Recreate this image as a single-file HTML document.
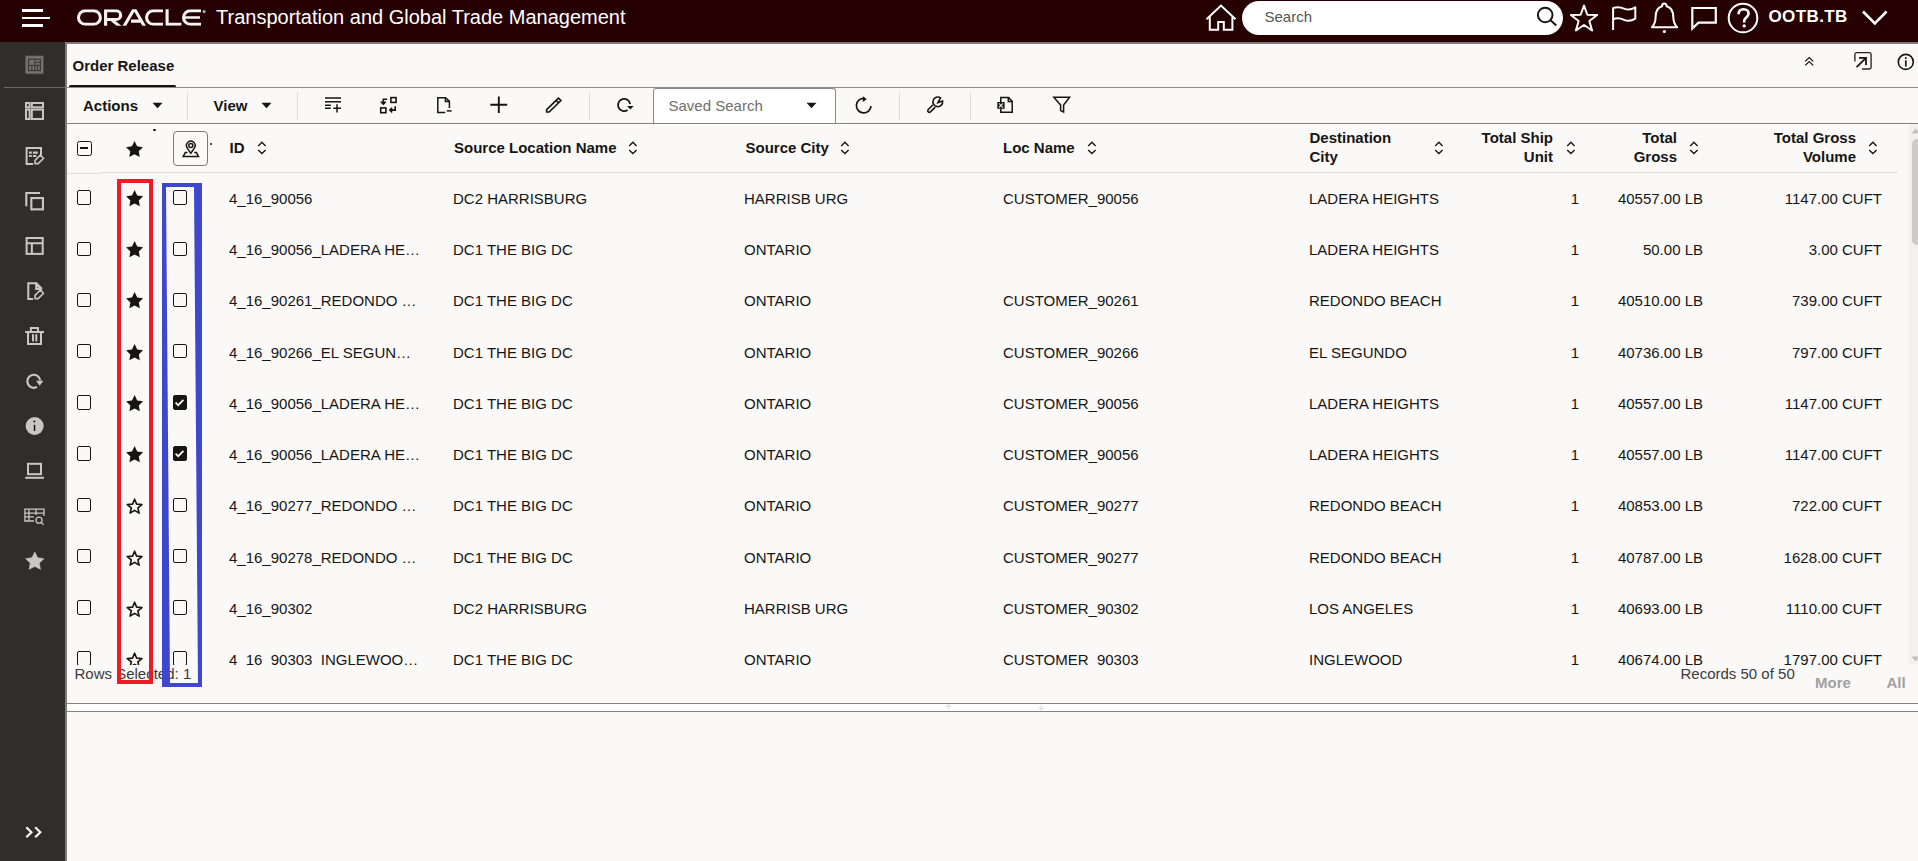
<!DOCTYPE html>
<html><head><meta charset="utf-8">
<style>
*{margin:0;padding:0;box-sizing:border-box}
html,body{width:1918px;height:861px;overflow:hidden;background:#faf9f8;font-family:"Liberation Sans",sans-serif;color:#161513}
.abs{position:absolute}
#hdr{position:absolute;left:0;top:0;width:1918px;height:42px;background:#260000}
#side{position:absolute;left:0;top:42px;width:65px;height:819px;background:#312d2a}
.sic{position:absolute;left:25px}
.c{position:absolute;font-size:15px;line-height:51.23px;height:51.23px;white-space:nowrap}
.r{text-align:right}
.cb{position:absolute;width:14.4px;height:14.4px;border:1.35px solid #161513;border-radius:2px;background:transparent}
.cbon{background:#161513}
.cbon svg{position:absolute;left:-1.6px;top:-1.6px}
.ic{position:absolute}
.ic svg{display:block}
.sort{position:absolute}
.hd{position:absolute;font-size:15px;font-weight:bold;line-height:19px;white-space:nowrap}
.tb{position:absolute}
.tb svg{display:block}
.vsep{position:absolute;top:92px;width:1px;height:28px;background:#dedcda}
</style></head><body>

<!-- HEADER -->
<div id="hdr">
  <div class="abs" style="left:22px;top:9px;width:21px;height:2.5px;background:#fff"></div>
  <div class="abs" style="left:22px;top:16.5px;width:28px;height:2.5px;background:#fff"></div>
  <div class="abs" style="left:22px;top:24px;width:21px;height:2.5px;background:#fff"></div>
  <svg class="abs" style="left:0;top:0" width="210" height="42" viewBox="0 0 210 42">
    <defs><clipPath id="lc"><rect x="70" y="9.2" width="140" height="16.6"/></clipPath></defs>
    <g fill="none" stroke="#f4f4f4" stroke-width="3.1" clip-path="url(#lc)">
      <rect x="78.5" y="10.75" width="21.9" height="13.5" rx="6.75"/>
      <path d="M105.6 27 V10.75 H116.2 A4.4 4.4 0 0 1 116.2 19.55 H107"/>
      <path d="M111.2 19.4 L121.2 27.6"/>
      <path d="M123.2 27.8 L134.3 8.6 L145.3 27.8" stroke-linejoin="round"/>
      <path d="M131 21.1 H140.5" stroke-width="3.2"/>
      <path d="M163 10.75 H153.3 A6.75 6.75 0 0 0 153.3 24.25 H163"/>
      <path d="M167.1 9 V24.25 H181.4"/>
      <path d="M201 10.75 H190.3 A6.75 6.75 0 0 0 190.3 24.25 H201"/>
      <path d="M184 17.5 H200" stroke-width="2.6"/>
    </g>
    <circle cx="204.1" cy="11.6" r="1.6" fill="#aaa"/>
  </svg>
  <div class="abs" style="left:216px;top:6px;font-size:20px;color:#fff;white-space:nowrap;line-height:23px">Transportation and Global Trade Management</div>

  <!-- home -->
  <svg class="abs" style="left:1204px;top:3px" width="34" height="30" viewBox="0 0 34 30">
    <path d="M2.5 16.2 L17 2.6 L31.5 16.2 M5.8 13.3 V26.8 H14.2 V19 H19.8 V26.8 H28.4 V13.3" fill="none" stroke="#fff" stroke-width="2"/>
  </svg>
  <!-- search -->
  <div class="abs" style="left:1242px;top:0.5px;width:321px;height:34px;border-radius:17px;background:#fff"></div>
  <div class="abs" style="left:1264.5px;top:8px;font-size:15px;color:#555;line-height:17px">Search</div>
  <svg class="abs" style="left:1535px;top:5px" width="24" height="24" viewBox="0 0 24 24">
    <circle cx="10.2" cy="10" r="7.3" fill="none" stroke="#161513" stroke-width="2"/>
    <path d="M15.5 15.3 L21.3 20.6" stroke="#161513" stroke-width="2"/>
  </svg>
  <!-- star -->
  <svg class="abs" style="left:1564px;top:0px" width="40" height="36" viewBox="1564 0 40 36">
    <path d="M1584.00 5.50 L1587.33 14.72 L1597.12 15.04 L1589.38 21.05 L1592.11 30.46 L1584.00 24.96 L1575.89 30.46 L1578.62 21.05 L1570.88 15.04 L1580.67 14.72 Z" fill="none" stroke="#fff" stroke-width="2" stroke-linejoin="round"/>
  </svg>
  <!-- flag -->
  <svg class="abs" style="left:1606px;top:0px" width="36" height="36" viewBox="1606 0 36 36">
    <path d="M1613.1 29.9 V8.2 C1617 6.4 1620.5 7 1624 8.6 C1628 10.4 1631.5 9.8 1635.3 7.4 V18.6 C1631.5 21 1628 21.6 1624 19.8 C1620.5 18.2 1617 17.6 1613.1 19.4" fill="none" stroke="#fff" stroke-width="2" stroke-linejoin="round"/>
  </svg>
  <!-- bell -->
  <svg class="abs" style="left:1650px;top:1px" width="30" height="34" viewBox="0 0 30 34">
    <path d="M14.2 2.6 C15.8 2.6 16.6 4 16.6 5.2 C21.4 6.4 23.3 10.5 23.3 16 C23.3 21 24.5 23.5 27.2 26.3 H1.9 C4.6 23.5 5.6 21 5.6 16 C5.6 10.5 7.4 6.4 12.1 5.2 C12.1 4 12.8 2.6 14.2 2.6 Z" fill="none" stroke="#fff" stroke-width="2" stroke-linejoin="round"/>
    <circle cx="14.4" cy="30.5" r="1.6" fill="#fff"/>
  </svg>
  <!-- chat -->
  <svg class="abs" style="left:1690px;top:5px" width="30" height="26" viewBox="0 0 30 26">
    <path d="M2.3 3 H25.8 V17.6 H8.5 L2.3 23.5 Z" fill="none" stroke="#fff" stroke-width="2.2" stroke-linejoin="miter"/>
  </svg>
  <!-- help -->
  <svg class="abs" style="left:1726px;top:1px" width="34" height="34" viewBox="0 0 34 34">
    <circle cx="17" cy="17" r="14.3" fill="none" stroke="#fff" stroke-width="2"/>
    <path d="M12.6 13.2 C12.6 10 14.8 8.3 17.6 8.3 C20.5 8.3 22.6 10.1 22.6 12.6 C22.6 16.2 18.2 16.4 18.2 20.2 V21.4" fill="none" stroke="#fff" stroke-width="2.6"/>
    <circle cx="18.2" cy="24.9" r="1.7" fill="#fff"/>
  </svg>
  <div class="abs" style="left:1768.5px;top:7px;font-size:17px;font-weight:bold;color:#fff;letter-spacing:0.4px;line-height:19px">OOTB.TB</div>
  <svg class="abs" style="left:1860px;top:8px" width="30" height="20" viewBox="0 0 30 20">
    <path d="M3 3.5 L14.8 15.3 L26.6 3.5" fill="none" stroke="#fff" stroke-width="2.6"/>
  </svg>
</div>

<!-- SIDEBAR -->
<div id="side">
  <div class="abs" style="left:4px;top:45px;width:61px;height:1px;background:#6b6967"></div>
</div>
<svg class="abs" style="left:22px;top:52px" width="24" height="24" viewBox="22 52 24 24" ><rect x="25.4" y="55.8" width="18" height="18" fill="#74716f"/><rect x="25.4" y="55.8" width="18" height="18" fill="none" stroke="#5a5653" stroke-width="0.8" stroke-dasharray="1 1"/><g fill="none" stroke="#3a3633" stroke-width="1.1"><rect x="28.6" y="59.2" width="11.8" height="11.4"/><path d="M28.6 65.3 H40.4 M34.9 59.2 V65.3 M34.9 62.2 H40.4 M31.9 65.3 V70.6 M34.9 65.3 V70.6 M37.6 65.3 V70.6"/></g></svg>
<svg class="abs" style="left:22px;top:98px" width="24" height="24" viewBox="22 98 24 24" ><g fill="none" stroke="#c9c7c5" stroke-width="2"><rect x="26" y="103" width="3.6" height="4.3"/><rect x="31.8" y="103" width="11.2" height="4.3"/><rect x="26" y="109.6" width="3.6" height="9.4"/><rect x="31.8" y="109.6" width="11.2" height="9.4"/></g></svg>
<svg class="abs" style="left:22px;top:143px" width="26" height="26" viewBox="22 143 26 26" ><g fill="none" stroke="#c9c7c5" stroke-width="2"><path d="M33.2 163.9 H26.6 V148.1 H41 V155"/></g><g fill="#c9c7c5"><rect x="29" y="151.5" width="2.8" height="2.3"/><rect x="32.9" y="151.5" width="4.9" height="2.3"/><rect x="29" y="155" width="2.8" height="2"/><rect x="32.9" y="155" width="3.5" height="2"/></g><path d="M35 163.6 V160.4 L40.4 155 L43.6 158.2 L38.2 163.6 Z" fill="none" stroke="#c9c7c5" stroke-width="1.6" stroke-linejoin="round"/></svg>
<svg class="abs" style="left:22px;top:188px" width="24" height="26" viewBox="22 188 24 26" ><g fill="none" stroke="#c9c7c5" stroke-width="2.1"><path d="M26.3 206.2 V193 H40"/><rect x="31.35" y="198.05" width="11.6" height="11.3"/></g></svg>
<svg class="abs" style="left:22px;top:233px" width="24" height="24" viewBox="22 233 24 24" ><g fill="none" stroke="#c9c7c5" stroke-width="2"><rect x="26.6" y="238" width="16.1" height="15.9"/><path d="M26.6 243.2 H42.7 M31.85 243.2 V253.9"/></g></svg>
<svg class="abs" style="left:22px;top:278px" width="26" height="26" viewBox="22 278 26 26" ><g fill="none" stroke="#c9c7c5" stroke-width="2"><path d="M33.2 298.9 H28.3 V283.3 H36.3"/></g><path d="M35.2 282.3 H36.8 L42.2 287.8 V290 H35.2 Z" fill="#c9c7c5"/><path d="M37 288 L38.2 286.8" stroke="#555" stroke-width="0.8"/><path d="M35 298.6 V295.4 L40.4 290 L43.6 293.2 L38.2 298.6 Z" fill="none" stroke="#c9c7c5" stroke-width="1.6" stroke-linejoin="round"/></svg>
<svg class="abs" style="left:22px;top:322px" width="24" height="26" viewBox="22 322 24 26" ><g fill="none" stroke="#c9c7c5" stroke-width="2"><path d="M25.2 332 H44 M28 332.9 V344 H41 V332.9 M30.9 331 V328 H38 V331"/></g><g fill="#c9c7c5"><rect x="32" y="334.2" width="2" height="7.2"/><rect x="35.3" y="334.2" width="2" height="7.2"/></g></svg>
<svg class="abs" style="left:22px;top:370px" width="24" height="24" viewBox="22 370 24 24" ><path d="M37.05 386.9 A6.5 6.5 0 1 1 40.24 380.4" fill="none" stroke="#c9c7c5" stroke-width="2.2"/><path d="M36 380.8 H43.4 L39.7 385.8 Z" fill="#c9c7c5"/></svg>
<svg class="abs" style="left:22px;top:414px" width="24" height="24" viewBox="22 414 24 24" ><circle cx="34.65" cy="426" r="9" fill="#c9c7c5"/><path d="M34.55 424.8 V431" stroke="#161513" stroke-width="1.5"/><circle cx="34.4" cy="421.6" r="1" fill="#161513"/></svg>
<svg class="abs" style="left:22px;top:460px" width="24" height="22" viewBox="22 460 24 22" ><g fill="none" stroke="#c9c7c5" stroke-width="2"><rect x="28" y="463.8" width="13" height="10.4"/><path d="M25.2 477.8 H44"/></g></svg>
<svg class="abs" style="left:22px;top:505px" width="26" height="24" viewBox="22 505 26 24" ><g fill="none" stroke="#c9c7c5" stroke-width="1.3"><path d="M34 521 H24.9 V509.2 H44 V516 M24.9 513.1 H44 M24.9 516.8 H34 M28.9 509.2 V521 M36 509.2 V515"/><circle cx="39" cy="520.2" r="3"/><path d="M41.2 522.4 L43.6 524.8"/></g></svg>
<svg class="abs" style="left:22px;top:548px" width="26" height="24" viewBox="22 548 26 24" ><path d="M34.80 552.00 L37.62 557.72 L43.93 558.63 L39.37 563.08 L40.44 569.37 L34.80 566.40 L29.16 569.37 L30.23 563.08 L25.67 558.63 L31.98 557.72 Z" fill="#c9c7c5" stroke="#c9c7c5" stroke-width="0.6" stroke-linejoin="round"/></svg>
<svg class="abs" style="left:22px;top:822px" width="24" height="20" viewBox="22 822 24 20" ><g fill="none" stroke="#f6f6f6" stroke-width="2.2"><path d="M26.3 827.2 L31.4 832.2 L26.3 837.2 M35.2 827.2 L40.3 832.2 L35.2 837.2"/></g></svg>

<!-- main borders -->
<div class="abs" style="left:65px;top:42px;width:2px;height:819px;background:#7d7b79"></div>
<div class="abs" style="left:65px;top:42px;width:1853px;height:2px;background:#7d7b79"></div>
<div class="abs" style="left:67px;top:44px;width:1851px;height:1px;background:#fff"></div>

<!-- title -->
<div class="abs" style="left:72.5px;top:56.5px;font-size:15px;font-weight:bold;line-height:17px;white-space:nowrap">Order Release</div>
<div class="abs" style="left:68.5px;top:85px;width:107px;height:2.2px;border-radius:1.5px 1.5px 0 0;background:#161513"></div>
<div class="abs" style="left:67px;top:87px;width:1851px;height:1px;background:#8f8d8b"></div>
<svg class="abs" style="left:1800px;top:52px" width="18" height="18" viewBox="1800 52 18 18" ><path d="M1805.2 61.4 L1809.2 57.6 L1813.2 61.4 M1805.2 65.4 L1809.2 61.6 L1813.2 65.4" fill="none" stroke="#161513" stroke-width="1.3"/></svg>
<svg class="abs" style="left:1850px;top:48px" width="26" height="26" viewBox="1850 48 26 26" ><g fill="none" stroke="#2a2421" stroke-width="1.35"><path d="M1854.9 61.5 V54.4 A1.8 1.8 0 0 1 1856.7 52.6 H1869.3 A1.8 1.8 0 0 1 1871.1 54.4 V67.2 A1.8 1.8 0 0 1 1869.3 69 H1862"/></g><g fill="none" stroke="#161513" stroke-width="1.8"><path d="M1856.6 67.2 L1866 57.8 M1859 57.8 H1866 V65"/></g></svg>
<svg class="abs" style="left:1894px;top:50px" width="24" height="24" viewBox="1894 50 24 24" ><circle cx="1905.8" cy="61.9" r="7.5" fill="none" stroke="#161513" stroke-width="1.6"/><path d="M1905.8 60.3 V66.6" stroke="#161513" stroke-width="1.7"/><circle cx="1905.8" cy="58" r="1" fill="#161513"/></svg>

<!-- toolbar -->
<div class="abs" style="left:83px;top:96.5px;font-size:15px;font-weight:bold;line-height:17px">Actions</div>
<svg class="abs" style="left:152px;top:102px" width="11" height="7" viewBox="0 0 11 7"><path d="M0.5 0.8 H10.5 L5.5 6.2 Z" fill="#161513"/></svg>
<div class="vsep" style="left:187px"></div>
<div class="abs" style="left:213.5px;top:96.5px;font-size:15px;font-weight:bold;line-height:17px">View</div>
<svg class="abs" style="left:261px;top:102px" width="11" height="7" viewBox="0 0 11 7"><path d="M0.5 0.8 H10.5 L5.5 6.2 Z" fill="#161513"/></svg>
<div class="vsep" style="left:297px"></div>
<svg class="abs" style="left:320px;top:92px" width="26" height="24" viewBox="320 92 26 24" ><g stroke="#161513" stroke-width="1.5" fill="none"><path d="M325 98.1 H341 M325 101.7 H341 M325 105.3 H330.8 M325 108.2 H330.8 M333.3 108.2 H341 M337 104.2 V112.6"/></g></svg>
<svg class="abs" style="left:376px;top:92px" width="26" height="24" viewBox="376 92 26 24" ><g stroke="#161513" stroke-width="1.6" fill="none"><rect x="390.9" y="97.6" width="5.2" height="4.8"/><rect x="380.7" y="107.9" width="5.2" height="4.8"/><path d="M387.2 99.3 H383.3 V103.8 M380.9 101.6 L383.3 104 L385.7 101.6 M395.2 106.3 V110.1 H390 M392.2 107.7 L389.8 110.1 L392.2 112.5"/></g></svg>
<svg class="abs" style="left:432px;top:92px" width="24" height="24" viewBox="432 92 24 24" ><g stroke="#161513" stroke-width="1.5" fill="none"><path d="M445.2 112.4 H437.8 V97.7 H445.6 L449.4 101.4 V108"/><path d="M445.4 97.8 V101.6 H449.3"/><path d="M446.8 110.9 H451.6"/></g></svg>
<svg class="abs" style="left:486px;top:92px" width="26" height="24" viewBox="486 92 26 24" ><g stroke="#161513" stroke-width="1.9" fill="none"><path d="M490.3 104.8 H507.2 M498.8 96.6 V113"/></g></svg>
<svg class="abs" style="left:540px;top:92px" width="26" height="24" viewBox="540 92 26 24" ><g stroke="#161513" stroke-width="1.6" fill="none" stroke-linejoin="miter"><path d="M558.4 98.1 L560.9 100.5 L549.2 112 H546.6 V109.6 Z M556.1 100.3 L558.7 102.8"/></g></svg>
<svg class="abs" style="left:612px;top:92px" width="26" height="24" viewBox="612 92 26 24" ><path d="M627.5 110.06 A6.1 6.1 0 1 1 630.14 104.15" fill="none" stroke="#161513" stroke-width="1.8"/><path d="M627.1 105.9 H633.6 L630.35 109.4 Z" fill="#161513"/></svg>
<svg class="abs" style="left:852px;top:92px" width="26" height="24" viewBox="852 92 26 24" ><path d="M864.6 98.4 A7.3 7.3 0 1 0 871 106" fill="none" stroke="#161513" stroke-width="1.7"/><path d="M862.8 96.2 L866.8 99.2 L862.8 102 Z" fill="#161513"/></svg>
<svg class="abs" style="left:922px;top:92px" width="26" height="24" viewBox="922 92 26 24" ><g stroke="#161513" stroke-width="1.6" fill="none" stroke-linejoin="miter"><path d="M940.5 97.8 A4.85 4.85 0 1 0 942.6 101.1 L937.9 102.6 Z"/><path d="M935.3 107.1 L930.4 111.9 A1.6 1.6 0 0 1 928.1 109.7 L933 104.8"/></g></svg>
<svg class="abs" style="left:994px;top:92px" width="24" height="24" viewBox="994 92 24 24" ><g stroke="#161513" stroke-width="1.5" fill="none"><path d="M1000.8 102 V97.5 H1008.6 L1012.2 101.2 V112.2 H1000.8 V108.7"/><path d="M1008.3 97.6 V101.5 H1012.2"/></g><rect x="997.3" y="102" width="7.3" height="6.8" fill="#161513"/><path d="M999 103.3 L1002.9 107.5 M1002.9 103.3 L999 107.5" stroke="#d8d8d8" stroke-width="1.2"/></svg>
<svg class="abs" style="left:1050px;top:92px" width="24" height="24" viewBox="1050 92 24 24" ><path d="M1053.8 97.3 H1069.6 L1063.6 105 V112 L1060.6 110.6 V105 Z" fill="none" stroke="#161513" stroke-width="1.5" stroke-linejoin="miter"/></svg>
<div class="vsep" style="left:589px"></div>
<!-- saved search -->
<div class="abs" style="left:653px;top:88px;width:183px;height:35.5px;background:#fff;border:1px solid #8a8a8a;border-bottom:none;border-radius:3px 3px 0 0"></div>
<div class="abs" style="left:668.5px;top:96.5px;font-size:15px;line-height:17px;color:#6f6e6c">Saved Search</div>
<svg class="abs" style="left:806px;top:102px" width="11" height="7" viewBox="0 0 11 7"><path d="M0.5 0.8 H10.5 L5.5 6.2 Z" fill="#161513"/></svg>
<div class="vsep" style="left:899px"></div>
<div class="vsep" style="left:970px"></div>
<div class="abs" style="left:67px;top:123px;width:1851px;height:1.3px;background:#828282"></div><div class="abs" style="left:67px;top:124.3px;width:1842px;height:1px;background:#fff"></div>

<!-- table header -->
<div class="abs" style="left:101px;top:172px;width:335px;height:1px;background:#e0dedc"></div>
<div class="abs" style="left:67px;top:173px;width:34px;height:1px;background:#e0dedc"></div>
<div class="abs" style="left:436px;top:172px;width:1461px;height:1px;background:#e0dedc"></div>
<div class="abs" style="left:76.6px;top:141px;width:15px;height:14.6px;border:1.5px solid #161513;border-radius:2.5px"></div>
<div class="abs" style="left:80.2px;top:147.3px;width:7.8px;height:1.6px;background:#161513"></div>
<svg class="abs" style="left:122px;top:136px" width="26" height="24" viewBox="122 136 26 24" ><path d="M134.50 141.00 L137.12 146.30 L142.96 147.15 L138.73 151.28 L139.73 157.10 L134.50 154.35 L129.27 157.10 L130.27 151.28 L126.04 147.15 L131.88 146.30 Z" fill="#161513"/></svg>
<div class="abs" style="left:153.2px;top:128.7px;width:2.5px;height:2.5px;background:#161513;border-radius:1px"></div>
<div class="abs" style="left:209.5px;top:142.6px;width:2.5px;height:2.5px;background:#161513;border-radius:1px"></div>
<div class="abs" style="left:173.2px;top:131.1px;width:34.4px;height:34.6px;border:1px solid #7d7b79;border-radius:4px"></div>
<svg class="abs" style="left:180px;top:138px" width="22" height="22" viewBox="180 138 22 22" ><g fill="none" stroke="#161513" stroke-width="1.5"><path d="M190.8 153.4 L187.15 147.8 A4.3 4.3 0 1 1 194.45 147.8 Z" stroke-linejoin="round"/><circle cx="190.8" cy="145.6" r="2"/><path d="M187.5 152.6 H185.3 L183.2 156.5 H198.5 L196.4 152.6 H194.2"/></g></svg>
<div class="hd" style="left:229.5px;top:137.9px">ID</div>
<svg class="abs" style="left:255.5px;top:141.4px" width="12" height="14" viewBox="255.5 141.4 12 14" ><path d="M257.7 146.4 L261.4 142.70000000000002 L265.1 146.4 M257.7 150.3 L261.4 153.9 L265.1 150.3" fill="none" stroke="#161513" stroke-width="1.35"/></svg>
<div class="hd" style="left:454px;top:137.9px">Source Location Name</div>
<svg class="abs" style="left:626.5px;top:141.4px" width="12" height="14" viewBox="626.5 141.4 12 14" ><path d="M628.7 146.4 L632.4 142.70000000000002 L636.1 146.4 M628.7 150.3 L632.4 153.9 L636.1 150.3" fill="none" stroke="#161513" stroke-width="1.35"/></svg>
<div class="hd" style="left:745.5px;top:137.9px">Source City</div>
<svg class="abs" style="left:839px;top:141.4px" width="12" height="14" viewBox="839 141.4 12 14" ><path d="M841.2 146.4 L844.9 142.70000000000002 L848.6 146.4 M841.2 150.3 L844.9 153.9 L848.6 150.3" fill="none" stroke="#161513" stroke-width="1.35"/></svg>
<div class="hd" style="left:1003px;top:137.9px">Loc Name</div>
<svg class="abs" style="left:1086px;top:141.4px" width="12" height="14" viewBox="1086 141.4 12 14" ><path d="M1088.2 146.4 L1091.9 142.70000000000002 L1095.6 146.4 M1088.2 150.3 L1091.9 153.9 L1095.6 150.3" fill="none" stroke="#161513" stroke-width="1.35"/></svg>
<div class="hd" style="left:1309.5px;top:128.1px">Destination<br>City</div>
<svg class="abs" style="left:1433.3px;top:141.4px" width="12" height="14" viewBox="1433.3 141.4 12 14" ><path d="M1435.5 146.4 L1439.2 142.70000000000002 L1442.8999999999999 146.4 M1435.5 150.3 L1439.2 153.9 L1442.8999999999999 150.3" fill="none" stroke="#161513" stroke-width="1.35"/></svg>
<div class="hd" style="right:365px;top:128.1px;text-align:right">Total Ship<br>Unit</div>
<svg class="abs" style="left:1564.8px;top:141.4px" width="12" height="14" viewBox="1564.8 141.4 12 14" ><path d="M1567.0 146.4 L1570.7 142.70000000000002 L1574.3999999999999 146.4 M1567.0 150.3 L1570.7 153.9 L1574.3999999999999 150.3" fill="none" stroke="#161513" stroke-width="1.35"/></svg>
<div class="hd" style="right:241px;top:128.1px;text-align:right">Total<br>Gross</div>
<svg class="abs" style="left:1688.3px;top:141.4px" width="12" height="14" viewBox="1688.3 141.4 12 14" ><path d="M1690.5 146.4 L1694.2 142.70000000000002 L1697.8999999999999 146.4 M1690.5 150.3 L1694.2 153.9 L1697.8999999999999 150.3" fill="none" stroke="#161513" stroke-width="1.35"/></svg>
<div class="hd" style="right:62px;top:128.1px;text-align:right">Total Gross<br>Volume</div>
<svg class="abs" style="left:1867.2px;top:141.4px" width="12" height="14" viewBox="1867.2 141.4 12 14" ><path d="M1869.4 146.4 L1873.1000000000001 142.70000000000002 L1876.8 146.4 M1869.4 150.3 L1873.1000000000001 153.9 L1876.8 150.3" fill="none" stroke="#161513" stroke-width="1.35"/></svg>

<div class="cb" style="left:76.8px;top:190.3px"></div>
<svg class="abs" style="left:122px;top:187.00px" width="26" height="24" viewBox="122 187.00 26 24"><path d="M134.60 190.10 L137.22 195.40 L143.06 196.25 L138.83 200.38 L139.83 206.20 L134.60 203.45 L129.37 206.20 L130.37 200.38 L126.14 196.25 L131.98 195.40 Z" fill="#161513"/></svg>
<div class="cb" style="left:173px;top:190.3px"></div>
<div class="c" style="left:229px;top:173.0px">4_16_90056</div>
<div class="c" style="left:453px;top:173.0px">DC2 HARRISBURG</div>
<div class="c" style="left:744px;top:173.0px">HARRISB URG</div>
<div class="c" style="left:1003px;top:173.0px">CUSTOMER_90056</div>
<div class="c" style="left:1309px;top:173.0px">LADERA HEIGHTS</div>
<div class="c r" style="right:339px;top:173.0px">1</div>
<div class="c r" style="right:215px;top:173.0px">40557.00 LB</div>
<div class="c r" style="right:36px;top:173.0px">1147.00 CUFT</div>
<div class="cb" style="left:76.8px;top:241.53px"></div>
<svg class="abs" style="left:122px;top:238.23px" width="26" height="24" viewBox="122 238.23 26 24"><path d="M134.60 241.33 L137.22 246.63 L143.06 247.48 L138.83 251.61 L139.83 257.43 L134.60 254.68 L129.37 257.43 L130.37 251.61 L126.14 247.48 L131.98 246.63 Z" fill="#161513"/></svg>
<div class="cb" style="left:173px;top:241.53px"></div>
<div class="c" style="left:229px;top:224.23px">4_16_90056_LADERA HE…</div>
<div class="c" style="left:453px;top:224.23px">DC1 THE BIG DC</div>
<div class="c" style="left:744px;top:224.23px">ONTARIO</div>
<div class="c" style="left:1003px;top:224.23px"></div>
<div class="c" style="left:1309px;top:224.23px">LADERA HEIGHTS</div>
<div class="c r" style="right:339px;top:224.23px">1</div>
<div class="c r" style="right:215px;top:224.23px">50.00 LB</div>
<div class="c r" style="right:36px;top:224.23px">3.00 CUFT</div>
<div class="cb" style="left:76.8px;top:292.76px"></div>
<svg class="abs" style="left:122px;top:289.46px" width="26" height="24" viewBox="122 289.46 26 24"><path d="M134.60 292.56 L137.22 297.86 L143.06 298.71 L138.83 302.84 L139.83 308.66 L134.60 305.91 L129.37 308.66 L130.37 302.84 L126.14 298.71 L131.98 297.86 Z" fill="#161513"/></svg>
<div class="cb" style="left:173px;top:292.76px"></div>
<div class="c" style="left:229px;top:275.46px">4_16_90261_REDONDO …</div>
<div class="c" style="left:453px;top:275.46px">DC1 THE BIG DC</div>
<div class="c" style="left:744px;top:275.46px">ONTARIO</div>
<div class="c" style="left:1003px;top:275.46px">CUSTOMER_90261</div>
<div class="c" style="left:1309px;top:275.46px">REDONDO BEACH</div>
<div class="c r" style="right:339px;top:275.46px">1</div>
<div class="c r" style="right:215px;top:275.46px">40510.00 LB</div>
<div class="c r" style="right:36px;top:275.46px">739.00 CUFT</div>
<div class="cb" style="left:76.8px;top:343.99px"></div>
<svg class="abs" style="left:122px;top:340.69px" width="26" height="24" viewBox="122 340.69 26 24"><path d="M134.60 343.79 L137.22 349.09 L143.06 349.94 L138.83 354.07 L139.83 359.89 L134.60 357.14 L129.37 359.89 L130.37 354.07 L126.14 349.94 L131.98 349.09 Z" fill="#161513"/></svg>
<div class="cb" style="left:173px;top:343.99px"></div>
<div class="c" style="left:229px;top:326.69px">4_16_90266_EL SEGUN…</div>
<div class="c" style="left:453px;top:326.69px">DC1 THE BIG DC</div>
<div class="c" style="left:744px;top:326.69px">ONTARIO</div>
<div class="c" style="left:1003px;top:326.69px">CUSTOMER_90266</div>
<div class="c" style="left:1309px;top:326.69px">EL SEGUNDO</div>
<div class="c r" style="right:339px;top:326.69px">1</div>
<div class="c r" style="right:215px;top:326.69px">40736.00 LB</div>
<div class="c r" style="right:36px;top:326.69px">797.00 CUFT</div>
<div class="cb" style="left:76.8px;top:395.22px"></div>
<svg class="abs" style="left:122px;top:391.92px" width="26" height="24" viewBox="122 391.92 26 24"><path d="M134.60 395.02 L137.22 400.32 L143.06 401.17 L138.83 405.30 L139.83 411.12 L134.60 408.37 L129.37 411.12 L130.37 405.30 L126.14 401.17 L131.98 400.32 Z" fill="#161513"/></svg>
<div class="cb cbon" style="left:173px;top:395.22px"><svg width="15" height="15" viewBox="0 0 15 15"><path d="M3.6 7.6 L6.2 10.2 L11.4 4.8" fill="none" stroke="#fff" stroke-width="1.8"/></svg></div>
<div class="c" style="left:229px;top:377.91999999999996px">4_16_90056_LADERA HE…</div>
<div class="c" style="left:453px;top:377.91999999999996px">DC1 THE BIG DC</div>
<div class="c" style="left:744px;top:377.91999999999996px">ONTARIO</div>
<div class="c" style="left:1003px;top:377.91999999999996px">CUSTOMER_90056</div>
<div class="c" style="left:1309px;top:377.91999999999996px">LADERA HEIGHTS</div>
<div class="c r" style="right:339px;top:377.91999999999996px">1</div>
<div class="c r" style="right:215px;top:377.91999999999996px">40557.00 LB</div>
<div class="c r" style="right:36px;top:377.91999999999996px">1147.00 CUFT</div>
<div class="cb" style="left:76.8px;top:446.45px"></div>
<svg class="abs" style="left:122px;top:443.15px" width="26" height="24" viewBox="122 443.15 26 24"><path d="M134.60 446.25 L137.22 451.55 L143.06 452.40 L138.83 456.53 L139.83 462.35 L134.60 459.60 L129.37 462.35 L130.37 456.53 L126.14 452.40 L131.98 451.55 Z" fill="#161513"/></svg>
<div class="cb cbon" style="left:173px;top:446.45px"><svg width="15" height="15" viewBox="0 0 15 15"><path d="M3.6 7.6 L6.2 10.2 L11.4 4.8" fill="none" stroke="#fff" stroke-width="1.8"/></svg></div>
<div class="c" style="left:229px;top:429.15px">4_16_90056_LADERA HE…</div>
<div class="c" style="left:453px;top:429.15px">DC1 THE BIG DC</div>
<div class="c" style="left:744px;top:429.15px">ONTARIO</div>
<div class="c" style="left:1003px;top:429.15px">CUSTOMER_90056</div>
<div class="c" style="left:1309px;top:429.15px">LADERA HEIGHTS</div>
<div class="c r" style="right:339px;top:429.15px">1</div>
<div class="c r" style="right:215px;top:429.15px">40557.00 LB</div>
<div class="c r" style="right:36px;top:429.15px">1147.00 CUFT</div>
<div class="cb" style="left:76.8px;top:497.68px"></div>
<svg class="abs" style="left:122px;top:494.38px" width="26" height="24" viewBox="122 494.38 26 24"><path d="M134.60 499.58 L136.64 504.48 L141.92 504.90 L137.90 508.35 L139.13 513.51 L134.60 510.74 L130.07 513.51 L131.30 508.35 L127.28 504.90 L132.56 504.48 Z" fill="none" stroke="#161513" stroke-width="1.6" stroke-linejoin="round"/></svg>
<div class="cb" style="left:173px;top:497.68px"></div>
<div class="c" style="left:229px;top:480.38px">4_16_90277_REDONDO …</div>
<div class="c" style="left:453px;top:480.38px">DC1 THE BIG DC</div>
<div class="c" style="left:744px;top:480.38px">ONTARIO</div>
<div class="c" style="left:1003px;top:480.38px">CUSTOMER_90277</div>
<div class="c" style="left:1309px;top:480.38px">REDONDO BEACH</div>
<div class="c r" style="right:339px;top:480.38px">1</div>
<div class="c r" style="right:215px;top:480.38px">40853.00 LB</div>
<div class="c r" style="right:36px;top:480.38px">722.00 CUFT</div>
<div class="cb" style="left:76.8px;top:548.91px"></div>
<svg class="abs" style="left:122px;top:545.61px" width="26" height="24" viewBox="122 545.61 26 24"><path d="M134.60 550.81 L136.64 555.71 L141.92 556.13 L137.90 559.58 L139.13 564.74 L134.60 561.97 L130.07 564.74 L131.30 559.58 L127.28 556.13 L132.56 555.71 Z" fill="none" stroke="#161513" stroke-width="1.6" stroke-linejoin="round"/></svg>
<div class="cb" style="left:173px;top:548.91px"></div>
<div class="c" style="left:229px;top:531.6099999999999px">4_16_90278_REDONDO …</div>
<div class="c" style="left:453px;top:531.6099999999999px">DC1 THE BIG DC</div>
<div class="c" style="left:744px;top:531.6099999999999px">ONTARIO</div>
<div class="c" style="left:1003px;top:531.6099999999999px">CUSTOMER_90277</div>
<div class="c" style="left:1309px;top:531.6099999999999px">REDONDO BEACH</div>
<div class="c r" style="right:339px;top:531.6099999999999px">1</div>
<div class="c r" style="right:215px;top:531.6099999999999px">40787.00 LB</div>
<div class="c r" style="right:36px;top:531.6099999999999px">1628.00 CUFT</div>
<div class="cb" style="left:76.8px;top:600.14px"></div>
<svg class="abs" style="left:122px;top:596.84px" width="26" height="24" viewBox="122 596.84 26 24"><path d="M134.60 602.04 L136.64 606.94 L141.92 607.36 L137.90 610.81 L139.13 615.97 L134.60 613.20 L130.07 615.97 L131.30 610.81 L127.28 607.36 L132.56 606.94 Z" fill="none" stroke="#161513" stroke-width="1.6" stroke-linejoin="round"/></svg>
<div class="cb" style="left:173px;top:600.14px"></div>
<div class="c" style="left:229px;top:582.8399999999999px">4_16_90302</div>
<div class="c" style="left:453px;top:582.8399999999999px">DC2 HARRISBURG</div>
<div class="c" style="left:744px;top:582.8399999999999px">HARRISB URG</div>
<div class="c" style="left:1003px;top:582.8399999999999px">CUSTOMER_90302</div>
<div class="c" style="left:1309px;top:582.8399999999999px">LOS ANGELES</div>
<div class="c r" style="right:339px;top:582.8399999999999px">1</div>
<div class="c r" style="right:215px;top:582.8399999999999px">40693.00 LB</div>
<div class="c r" style="right:36px;top:582.8399999999999px">1110.00 CUFT</div>
<div class="cb" style="left:76.8px;top:651.37px"></div>
<svg class="abs" style="left:122px;top:648.07px" width="26" height="24" viewBox="122 648.07 26 24"><path d="M134.60 653.27 L136.64 658.17 L141.92 658.59 L137.90 662.04 L139.13 667.20 L134.60 664.43 L130.07 667.20 L131.30 662.04 L127.28 658.59 L132.56 658.17 Z" fill="none" stroke="#161513" stroke-width="1.6" stroke-linejoin="round"/></svg>
<div class="cb" style="left:173px;top:651.37px"></div>
<div class="c" style="left:229px;top:634.0699999999999px">4_16_90303_INGLEWOO…</div>
<div class="c" style="left:453px;top:634.0699999999999px">DC1 THE BIG DC</div>
<div class="c" style="left:744px;top:634.0699999999999px">ONTARIO</div>
<div class="c" style="left:1003px;top:634.0699999999999px">CUSTOMER_90303</div>
<div class="c" style="left:1309px;top:634.0699999999999px">INGLEWOOD</div>
<div class="c r" style="right:339px;top:634.0699999999999px">1</div>
<div class="c r" style="right:215px;top:634.0699999999999px">40674.00 LB</div>
<div class="c r" style="right:36px;top:634.0699999999999px">1797.00 CUFT</div>

<!-- footer -->
<div class="abs" style="left:67px;top:665.2px;width:1842px;height:37px;background:#faf9f8"></div>
<div class="abs" style="left:74.5px;top:665px;font-size:15px;line-height:17px;color:#3a3a3a;white-space:nowrap">Rows Selected: 1</div>
<div class="abs" style="left:1680.5px;top:665px;font-size:15px;line-height:17px;color:#3a3a3a;white-space:nowrap">Records 50 of 50</div>
<div class="abs" style="left:1815px;top:674px;font-size:15px;font-weight:bold;line-height:17px;color:#a3a1a0">More</div>
<div class="abs" style="left:1886.5px;top:674px;font-size:15px;font-weight:bold;line-height:17px;color:#a3a1a0">All</div>
<div class="abs" style="left:67px;top:702.5px;width:1851px;height:1.5px;background:#828282"></div>
<div class="abs" style="left:67px;top:704px;width:1851px;height:7px;background:#fff"></div>
<div class="abs" style="left:67px;top:711px;width:1851px;height:1.3px;background:#828282"></div>

<svg class="abs" style="left:944px;top:703px" width="104" height="9" viewBox="944 703 104 9"><g fill="none" stroke="#dcdcdc" stroke-width="1.1"><path d="M948.5 710 V704.8 M946 707.2 L948.5 704.8 L951 707.2 M1041.1 705 V710 M1038.6 707.6 L1041.1 710 L1043.6 707.6"/></g></svg>
<!-- scrollbar -->
<div class="abs" style="left:1909px;top:124px;width:9px;height:540px;background:#f1f1f1"></div>
<svg class="abs" style="left:1909px;top:126px" width="9" height="9" viewBox="0 0 9 9"><path d="M2.5 7.5 L6.5 2.5 L9 5 V7.5 Z" fill="#c4c2c0"/></svg>
<div class="abs" style="left:1912px;top:138.5px;width:10px;height:106px;border-radius:5px;background:#cdcbc9"></div>
<svg class="abs" style="left:1909px;top:655px" width="9" height="8" viewBox="0 0 9 8"><path d="M2.5 1.5 H9 V4 L6.5 6.5 Z" fill="#c4c2c0"/></svg>

<!-- annotations -->
<svg class="abs" style="left:0;top:0" width="1918" height="861" viewBox="0 0 1918 861">
  <path d="M117 179 H153 V684 H117 Z M121 183 V680 H149 V183 Z" fill="#ec1c24" fill-rule="evenodd"/>
  <path d="M162 183 H202 V687 H162 Z M166 187 L170 683 H198 L194 187 Z" fill="#3f48cc" fill-rule="evenodd"/>
</svg>
</body></html>
